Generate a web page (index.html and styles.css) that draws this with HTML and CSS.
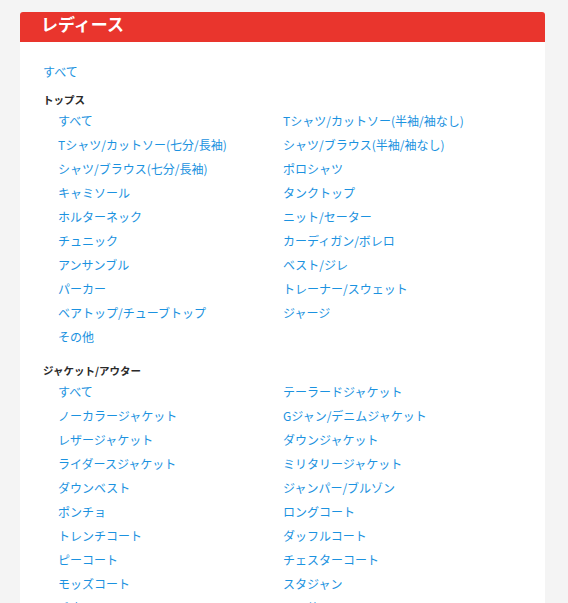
FILE: index.html
```html
<!DOCTYPE html>
<html lang="ja">
<head>
<meta charset="utf-8">
<link rel="stylesheet" href="styles.css">
</head>
<body>
<div class="card">
  <div class="card-head">レディース</div>
  <div class="card-body">
    <a class="all" href="#">すべて</a>
    <section class="cat">
      <h3 class="cat-title">トップス</h3>
      <ul class="items">
        <li><a href="#">すべて</a></li>
        <li><a href="#">Tシャツ/カットソー(半袖/袖なし)</a></li>
        <li><a href="#">Tシャツ/カットソー(七分/長袖)</a></li>
        <li><a href="#">シャツ/ブラウス(半袖/袖なし)</a></li>
        <li><a href="#">シャツ/ブラウス(七分/長袖)</a></li>
        <li><a href="#">ポロシャツ</a></li>
        <li><a href="#">キャミソール</a></li>
        <li><a href="#">タンクトップ</a></li>
        <li><a href="#">ホルターネック</a></li>
        <li><a href="#">ニット/セーター</a></li>
        <li><a href="#">チュニック</a></li>
        <li><a href="#">カーディガン/ボレロ</a></li>
        <li><a href="#">アンサンブル</a></li>
        <li><a href="#">ベスト/ジレ</a></li>
        <li><a href="#">パーカー</a></li>
        <li><a href="#">トレーナー/スウェット</a></li>
        <li><a href="#">ベアトップ/チューブトップ</a></li>
        <li><a href="#">ジャージ</a></li>
        <li><a href="#">その他</a></li>
      </ul>
    </section>
    <section class="cat">
      <h3 class="cat-title">ジャケット/アウター</h3>
      <ul class="items">
        <li><a href="#">すべて</a></li>
        <li><a href="#">テーラードジャケット</a></li>
        <li><a href="#">ノーカラージャケット</a></li>
        <li><a href="#">Gジャン/デニムジャケット</a></li>
        <li><a href="#">レザージャケット</a></li>
        <li><a href="#">ダウンジャケット</a></li>
        <li><a href="#">ライダースジャケット</a></li>
        <li><a href="#">ミリタリージャケット</a></li>
        <li><a href="#">ダウンベスト</a></li>
        <li><a href="#">ジャンパー/ブルゾン</a></li>
        <li><a href="#">ポンチョ</a></li>
        <li><a href="#">ロングコート</a></li>
        <li><a href="#">トレンチコート</a></li>
        <li><a href="#">ダッフルコート</a></li>
        <li><a href="#">ピーコート</a></li>
        <li><a href="#">チェスターコート</a></li>
        <li><a href="#">モッズコート</a></li>
        <li><a href="#">スタジャン</a></li>
        <li><a href="#">毛皮コート</a></li>
        <li><a href="#">その他</a></li>
      </ul>
    </section>
  </div>
</div>
</body>
</html>
```

FILE: styles.css
```css
html, body {
  margin: 0;
  padding: 0;
  background: #f4f4f4;
  font-family: "Noto Sans CJK JP", "Noto Sans", sans-serif;
}
body {
  padding: 12px 23px 0 20px;
  height: 603px;
  overflow: hidden;
  box-sizing: border-box;
}
.card {
  background: #fff;
  border-radius: 3px 3px 0 0;
  overflow: hidden;
}
.card-head {
  background: #e9352d;
  color: #fff;
  font-weight: bold;
  font-size: 17px;
  height: 30px;
  line-height: 24px;
  padding-left: 21px;
}
.card-body {
  padding: 18px 0 20px 23px;
}
a {
  color: #1b92e0;
  text-decoration: none;
}
.all {
  display: block;
  font-size: 12px;
  line-height: 24px;
}
.cat {
  margin-top: 7px;
}
.cat + .cat {
  margin-top: 13px;
}
.cat-title {
  margin: 0;
  font-size: 10.5px;
  font-weight: bold;
  color: #2a2a2a;
  line-height: 18px;
}
.items {
  list-style: none;
  margin: 0;
  padding: 0 0 0 15px;
  display: grid;
  grid-template-columns: 225px 225px;
}
.items li {
  font-size: 12px;
  line-height: 24px;
  white-space: nowrap;
}
```
